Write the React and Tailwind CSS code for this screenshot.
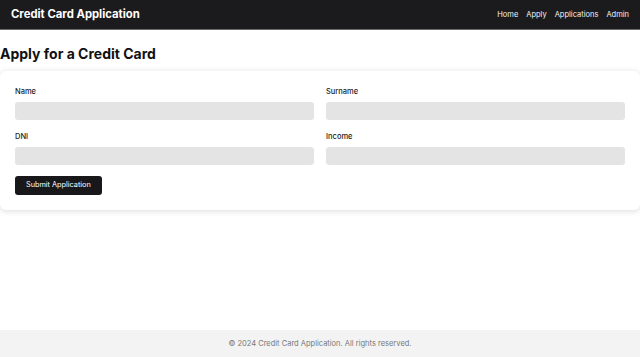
export default function App() {
  const fields = ["Name", "Surname", "DNI", "Income"];

  return (
    <div className="min-h-screen flex flex-col bg-white font-['Inter',sans-serif]">
      <header className="h-[30px] bg-[#1b1b1d] border-b border-[#6b6b6b] flex items-center justify-between pl-[11px] pr-[11px]">
        <h1 className="text-[11.3px] font-bold text-white">Credit Card Application</h1>
        <nav className="flex gap-[8px] text-[7.5px] text-gray-100">
          <a href="#">Home</a>
          <a href="#">Apply</a>
          <a href="#">Applications</a>
          <a href="#">Admin</a>
        </nav>
      </header>

      <main className="flex-1">
        <h2 className="mt-[13px] mb-[6px] text-[14px] leading-[22px] font-bold text-[#111]">
          Apply for a Credit Card
        </h2>
        <form className="bg-white rounded-md shadow-[0_1px_6px_rgba(0,0,0,0.15)] p-[15px]">
          <div className="grid grid-cols-2 gap-x-[12px] gap-y-[11px]">
            {fields.map((f) => (
              <div key={f} className="flex flex-col gap-[4px]">
                <label className="text-[7.5px] leading-[12px] font-medium text-[#222]">{f}</label>
                <div className="h-[18px] rounded-[3px] bg-[#e4e4e4]" />
              </div>
            ))}
          </div>
          <button
            type="button"
            className="mt-[11px] h-[19px] px-[11px] rounded-[3px] bg-[#18181b] text-white text-[7.3px]"
          >
            Submit Application
          </button>
        </form>
      </main>

      <footer className="h-[27px] bg-[#f3f3f3] flex items-center justify-center text-[7.5px] text-[#777]">
        © 2024 Credit Card Application. All rights reserved.
      </footer>
    </div>
  );
}
